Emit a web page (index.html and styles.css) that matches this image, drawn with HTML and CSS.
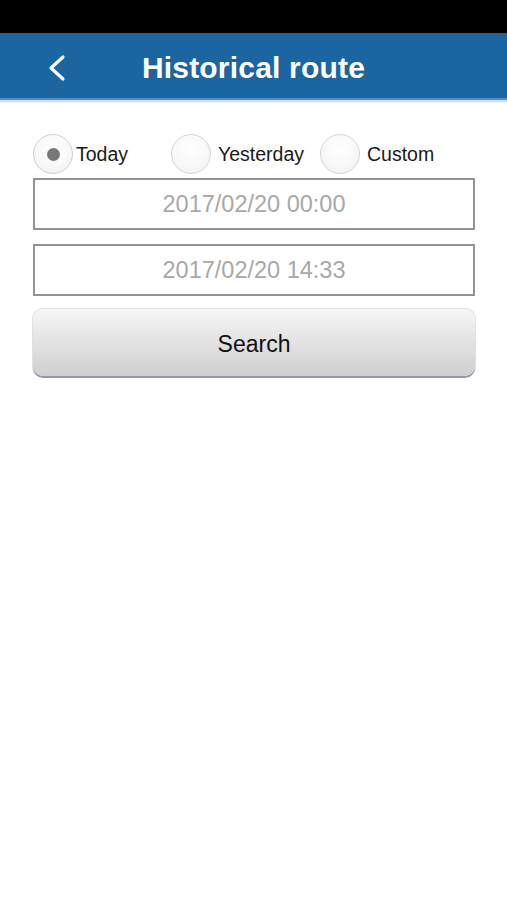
FILE: index.html
```html
<!DOCTYPE html>
<html>
<head>
<meta charset="utf-8">
<link rel="stylesheet" href="styles.css">
</head>
<body>
<div class="status"></div>
<header class="nav">
  <div class="nav-left">
    <svg class="back" width="18" height="28" viewBox="0 0 18 28"><polyline points="15,3 3,14 15,25" fill="none" stroke="#fff" stroke-width="3.2" stroke-linecap="round" stroke-linejoin="round"/></svg>
  </div>
  <h1 class="title">Historical route</h1>
  <div></div>
</header>
<div class="nav-shadow"></div>
<main class="content">
  <div class="radios">
    <div class="radio-item"><span class="radio checked"><span class="dot"></span></span><span class="label">Today</span></div>
    <div class="radio-item"><span class="radio"></span><span class="label">Yesterday</span></div>
    <div class="radio-item"><span class="radio"></span><span class="label">Custom</span></div>
  </div>
  <div class="field">2017/02/20 00:00</div>
  <div class="field">2017/02/20 14:33</div>
  <div class="button">Search</div>
</main>
</body>
</html>
```
FILE: styles.css
```css
* { box-sizing: border-box; }
html, body { margin: 0; padding: 0; background: #fff; }
body { font-family: "Liberation Sans", Arial, sans-serif; width: 507px; height: 900px; overflow: hidden; }
.status { height: 33px; background: #000; }
.nav {
  height: 65px;
  background: #1b66a1;
  display: grid;
  grid-template-columns: 1fr auto 1fr;
  align-items: center;
}
.nav-left { display: flex; align-items: center; padding-left: 48px; padding-top: 4px; }
.back { display: block; }
.title {
  margin: 0;
  color: #fff;
  font-size: 30px;
  font-weight: bold;
  letter-spacing: 0.2px;
  padding-top: 4px;
}
.nav-shadow {
  height: 5px;
  background: linear-gradient(#4f8dc4 0, #4f8dc4 2px, #c9d6e2 2px, #eef1f4 5px);
}
.content { padding: 31px 32px 0 33px; }
.radios {
  display: grid;
  grid-template-columns: 138px 149px auto;
  height: 40px;
  align-items: center;
}
.radio-item { display: flex; align-items: center; gap: 6px; }
.radio {
  width: 40px; height: 40px;
  border-radius: 50%;
  border: 1.5px solid #d6d6d6;
  background: radial-gradient(circle at 50% 40%, #ffffff 0, #f8f8f8 55%, #ececec 100%);
  display: flex; align-items: center; justify-content: center;
}
.radio.checked { border-color: #d0d0d0; }
.dot { width: 13px; height: 13px; border-radius: 50%; background: #777; }
.label { font-size: 19.5px; color: #1a1a1a; }
.radio-item:nth-child(1) .label { margin-left: -3px; }
.radio-item:nth-child(2) .label, .radio-item:nth-child(3) .label { margin-left: 1px; }
.field {
  margin-top: 4px;
  height: 52px;
  border: 2px solid #939393;
  display: flex; align-items: center; justify-content: center;
  font-size: 23.5px;
  color: #a8a8a8;
}
.field + .field { margin-top: 14px; }
.button {
  margin-top: 13px;
  height: 67px;
  padding-top: 3px;
  border-radius: 10px;
  background: linear-gradient(#f6f6f6, #e2e2e2 50%, #cfcfcf);
  box-shadow: 0 2px 0 #9894a6, 0 0 0 1px #e0e0e0;
  display: flex; align-items: center; justify-content: center;
  font-size: 23px;
  color: #111;
}
```
